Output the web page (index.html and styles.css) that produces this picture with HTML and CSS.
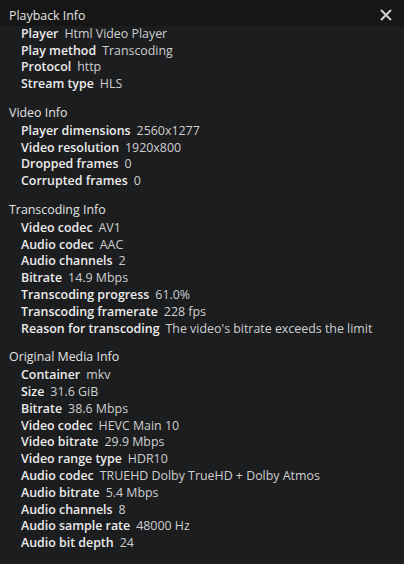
FILE: index.html
```html
<!DOCTYPE html>
<html lang="en">
<head>
    <meta charset="UTF-8">
    <meta name="viewport" content="width=device-width, initial-scale=1.0">
    <title>Playback Info</title>
    <link rel="stylesheet" href="styles.css">
</head>
<body>
    <div class="playerStats">
        <button class="closeBtn" title="Close">
            <svg width="14" height="14" viewBox="0 0 14 14"><path d="M2 2 L12 12 M12 2 L2 12" stroke="currentColor" stroke-width="2" fill="none"/></svg>
        </button>

        <div class="section">
            <div class="sectionTitle">Playback Info</div>
            <div class="row"><span class="label">Player</span><span class="value">Html Video Player</span></div>
            <div class="row"><span class="label">Play method</span><span class="value">Transcoding</span></div>
            <div class="row"><span class="label">Protocol</span><span class="value">http</span></div>
            <div class="row"><span class="label">Stream type</span><span class="value">HLS</span></div>
        </div>

        <div class="section">
            <div class="sectionTitle">Video Info</div>
            <div class="row"><span class="label">Player dimensions</span><span class="value">2560x1277</span></div>
            <div class="row"><span class="label">Video resolution</span><span class="value">1920x800</span></div>
            <div class="row"><span class="label">Dropped frames</span><span class="value">0</span></div>
            <div class="row"><span class="label">Corrupted frames</span><span class="value">0</span></div>
        </div>

        <div class="section">
            <div class="sectionTitle">Transcoding Info</div>
            <div class="row"><span class="label">Video codec</span><span class="value">AV1</span></div>
            <div class="row"><span class="label">Audio codec</span><span class="value">AAC</span></div>
            <div class="row"><span class="label">Audio channels</span><span class="value">2</span></div>
            <div class="row"><span class="label">Bitrate</span><span class="value">14.9 Mbps</span></div>
            <div class="row"><span class="label">Transcoding progress</span><span class="value">61.0%</span></div>
            <div class="row"><span class="label">Transcoding framerate</span><span class="value">228 fps</span></div>
            <div class="row"><span class="label">Reason for transcoding</span><span class="value">The video's bitrate exceeds the limit</span></div>
        </div>

        <div class="section">
            <div class="sectionTitle">Original Media Info</div>
            <div class="row"><span class="label">Container</span><span class="value">mkv</span></div>
            <div class="row"><span class="label">Size</span><span class="value">31.6 GiB</span></div>
            <div class="row"><span class="label">Bitrate</span><span class="value">38.6 Mbps</span></div>
            <div class="row"><span class="label">Video codec</span><span class="value">HEVC Main 10</span></div>
            <div class="row"><span class="label">Video bitrate</span><span class="value">29.9 Mbps</span></div>
            <div class="row"><span class="label">Video range type</span><span class="value">HDR10</span></div>
            <div class="row"><span class="label">Audio codec</span><span class="value">TRUEHD Dolby TrueHD + Dolby Atmos</span></div>
            <div class="row"><span class="label">Audio bitrate</span><span class="value">5.4 Mbps</span></div>
            <div class="row"><span class="label">Audio channels</span><span class="value">8</span></div>
            <div class="row"><span class="label">Audio sample rate</span><span class="value">48000 Hz</span></div>
            <div class="row"><span class="label">Audio bit depth</span><span class="value">24</span></div>
        </div>
    </div>
</body>
</html>
```

FILE: styles.css
```css
html, body {
    margin: 0;
    height: 100%;
}
body {
    background: linear-gradient(to bottom, #161616 0, #161616 25px, #1c1d1f 27px, #1c1d1f 100%);
    font-family: "Open Sans", "Noto Sans", sans-serif;
    font-size: 12.4px;
    line-height: 16.8px;
    color: #ddd;
}
.playerStats {
    position: relative;
    padding: 8px 9px 0 9px;
}
.closeBtn {
    position: absolute;
    top: 8px;
    right: 11px;
    background: none;
    border: none;
    padding: 0;
    color: #d0d0d0;
    cursor: pointer;
    line-height: 0;
}
.section {
    margin-bottom: 12px;
}
.sectionTitle {
    color: #e2e2e2;
    margin-bottom: 1px;
}
.row {
    padding-left: 12px;
    white-space: nowrap;
}
.label {
    font-weight: 600;
    color: #ececec;
}
.value {
    margin-left: 6px;
    color: #cfcfcf;
}
```
